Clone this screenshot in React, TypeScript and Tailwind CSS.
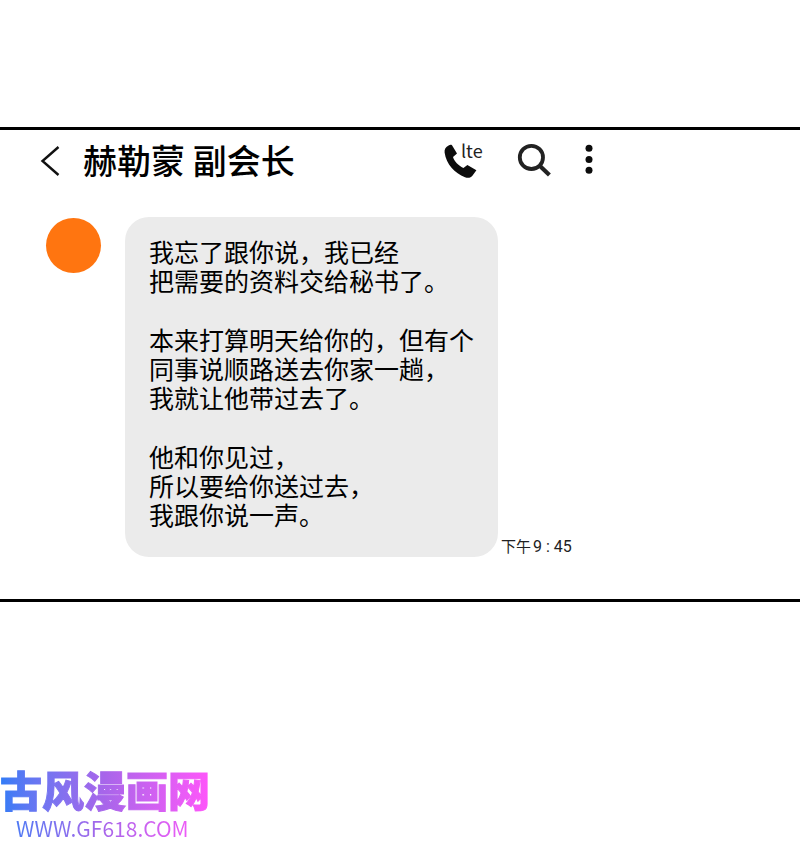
import React from 'react';

const CONTACT = '赫勒蒙 副会长';

const PARAGRAPHS = [
    ['我忘了跟你说，我已经', '把需要的资料交给秘书了。'],
    ['本来打算明天给你的，但有个', '同事说顺路送去你家一趟，', '我就让他带过去了。'],
    ['他和你见过，', '所以要给你送过去，', '我跟你说一声。'],
];

function BackIcon() {
    return (
        <svg className="w-5 h-8" viewBox="0 0 20 32" fill="none" stroke="#111" strokeWidth="2.4">
            <path d="M18.5 3 L2.5 17 L18.5 31" />
        </svg>
    );
}

function PhoneIcon() {
    return (
        <svg className="w-8 h-9 overflow-visible" viewBox="0 0 32 36" fill="#0c0c0c">
            <path d="M8 3.2 L13 11.6 L9 15 C10.4 19.4 14.2 23.4 19.4 26 L23.4 23 L32.4 28.2 L28.6 33.4 C26.8 35.8 24.2 36.4 21 35.2 C10.8 31.4 2.2 22.2 .6 10.6 C.2 7.2 1.8 4.8 4.6 3.4 C5.8 2.8 7 2.6 8 3.2 Z" />
        </svg>
    );
}

function SearchIcon() {
    return (
        <svg className="w-8 h-8 overflow-visible" viewBox="0 0 32 32" fill="none" stroke="#222">
            <circle cx="13.4" cy="13.4" r="11.6" strokeWidth="3.8" />
            <path d="M21.7 21.8 L31.4 31" strokeWidth="4.2" />
        </svg>
    );
}

function MoreIcon() {
    return (
        <svg className="w-2 h-8" viewBox="0 0 8 32" fill="#0c0c0c">
            <circle cx="4" cy="4.2" r="3.5" />
            <circle cx="4" cy="15.4" r="3.5" />
            <circle cx="4" cy="26.2" r="3.5" />
        </svg>
    );
}

export default function App() {
    return (
        <div className="min-h-screen bg-white text-black flex flex-col justify-between pt-[127px] font-['Noto_Sans_CJK_SC',sans-serif]">
            <main className="border-y-3 border-black pb-[42px]">
                {/* Chat header */}
                <header className="flex items-center h-[60px] pl-10">
                    <button type="button" aria-label="返回">
                        <BackIcon />
                    </button>
                    <h1 className="w-[360px] pl-[23px] text-[34px] leading-[40px] font-medium whitespace-nowrap">
                        {CONTACT}
                    </h1>
                    <div className="flex items-center pl-6">
                        <button type="button" className="relative" aria-label="通话 lte">
                            <PhoneIcon />
                            <span className="absolute left-[17px] -top-[2px] text-[18px] leading-5 text-[#222]">lte</span>
                        </button>
                        <button type="button" className="ml-[42px]" aria-label="搜索">
                            <SearchIcon />
                        </button>
                        <button type="button" className="ml-[35px]" aria-label="更多">
                            <MoreIcon />
                        </button>
                    </div>
                </header>

                {/* Message */}
                <div className="flex items-start pl-[46px] pt-[27px]">
                    <div className="w-[55px] h-[55px] mt-px shrink-0 rounded-full bg-[#ff7510]" />
                    <div className="ml-6 shrink-0 rounded-3xl bg-[#ebebeb] px-6 pt-5 pb-7 text-[25px] leading-[29px] flex flex-col gap-[30px]">
                        {PARAGRAPHS.map((lines) => (
                            <p key={lines[0]}>
                                {lines.map((line) => (
                                    <span key={line} className="block whitespace-nowrap">{line}</span>
                                ))}
                            </p>
                        ))}
                    </div>
                    <time className="self-end ml-[3px] whitespace-nowrap text-[15px] leading-5 text-[#222]">
                        下午
                        <span className="ml-[2px] text-[16px] font-['Roboto',sans-serif]">9 : 45</span>
                    </time>
                </div>
            </main>

            {/* Site mark */}
            <footer className="w-fit">
                <a
                    href="#"
                    className="block text-transparent bg-clip-text bg-linear-to-r from-[#2f7cf6] via-[#a865ea] to-[#ff55fa]"
                >
                    <span className="block text-[42px] leading-[54px] font-black [-webkit-text-stroke:1px_transparent]">古风漫画网</span>
                    <span className="block pl-4 pb-[2px] text-[21px] leading-6">WWW.GF618.COM</span>
                </a>
            </footer>
        </div>
    );
}
